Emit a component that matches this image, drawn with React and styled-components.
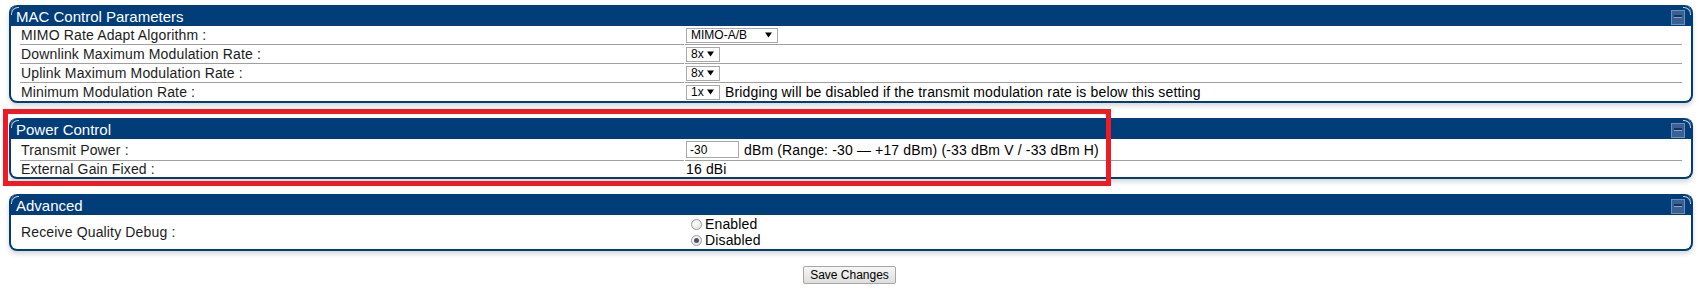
import styled, { createGlobalStyle } from 'styled-components';

const GlobalStyle = createGlobalStyle`
  body {
    margin: 0;
    background: #ffffff;
    font-family: "Liberation Sans", Arial, sans-serif;
  }
`

const Page = styled.div`
  position: relative;
  box-sizing: border-box;
  width: 1699px;
  height: 290px;
  display: flex;
  flex-direction: column;
  padding: 5px 6px 0 9px;
`

const Panel = styled.div`
  box-sizing: border-box;
  width: 100%;
  border: 2px solid #003d79;
  border-top: none;
  border-radius: 8px;
  background: #ffffff;
  box-shadow: 0 3px 5px rgba(0, 0, 0, 0.16);
  margin-bottom: 15px;
  overflow: hidden;
`

const Header = styled.div`
  position: relative;
  box-sizing: border-box;
  display: flex;
  justify-content: space-between;
  align-items: center;
  height: 21px;
  margin: 0 -2px;
  padding: 1px 8px 0 7px;
  background: #003d79;
  color: #ffffff;
  font-size: 15px;
  border-radius: 8px 8px 0 0;

  &::before, &::after {
    content: '';
    position: absolute;
    top: 2px;
    width: 7px;
    height: 7px;
    border-top: 1px solid rgba(225, 232, 242, 0.85);
  }
  &::before {
    left: 2px;
    border-left: 1px solid rgba(225, 232, 242, 0.85);
    border-top-left-radius: 7px;
  }
  &::after {
    right: 2px;
    border-right: 1px solid rgba(225, 232, 242, 0.85);
    border-top-right-radius: 7px;
  }
`

const Minimize = styled.span`
  box-sizing: border-box;
  display: flex;
  align-items: flex-start;
  justify-content: center;
  width: 14px;
  height: 15px;
  margin-top: 2px;
  background: #3a6194;
  border: 1px solid #6e8fbb;
  padding-top: 4px;

  &::before {
    content: '';
    display: block;
    width: 8px;
    height: 2px;
    background: #12335f;
    border-bottom: 1px solid #8aa4c8;
  }
`

const Body = styled.div`
  padding: 0 9px;
`

const Row = styled.div`
  display: grid;
  grid-template-columns: 664px 1fr;
  column-gap: 1px;
  min-height: ${p => p.$h || 19}px;
  font-size: 14px;
  letter-spacing: 0.15px;

  & > div {
    border-bottom: 1px solid #a0a0a0;
  }
  &:last-child > div {
    border-bottom: none;
  }
`

const Label = styled.div`
  display: flex;
  align-items: center;
  padding-left: 1px;
  color: #1c1c1c;
`

const Value = styled.div`
  display: flex;
  align-items: center;
  gap: 5px;
  padding-left: 1px;
  color: #000000;
`

const FakeSelect = styled.span`
  box-sizing: border-box;
  display: inline-flex;
  align-items: center;
  justify-content: space-between;
  width: ${p => p.$w}px;
  height: 15px;
  padding: 0 5px 0 4px;
  border: 1px solid #a9a9a9;
  background: #ffffff;
  font-size: 12px;
  letter-spacing: 0;
  color: #000000;
`

const Arrow = () => (
  <svg width="7" height="6" viewBox="0 0 7 6">
    <path d="M0 0.5 H7 L3.5 5.5 Z" fill="#000" />
  </svg>
)

const TextInput = styled.input`
  box-sizing: border-box;
  width: 53px;
  height: 17px;
  padding: 0 3px;
  border: 1px solid #a9a9a9;
  font-family: "Liberation Sans", Arial, sans-serif;
  font-size: 12px;
  color: #000000;
  outline: none;
`

const RadioGroup = styled.div`
  display: flex;
  flex-direction: column;
  padding: 1px 0 1px 5px;
`

const RadioLine = styled.label`
  display: flex;
  align-items: center;
  gap: 3px;
  height: 16px;
  font-size: 14px;
`

const RadioDot = styled.span`
  box-sizing: border-box;
  display: inline-flex;
  align-items: center;
  justify-content: center;
  width: 11px;
  height: 11px;
  border-radius: 50%;
  border: 1px solid #9c9c9c;
  background: radial-gradient(circle at 40% 35%, #ffffff, #dcdcdc);

  &::after {
    content: '';
    display: ${p => (p.$on ? 'block' : 'none')};
    width: 5px;
    height: 5px;
    border-radius: 50%;
    background: #5b4a6e;
  }
`

const Footer = styled.div`
  display: flex;
  justify-content: center;
  margin-left: -3px;
`

const SaveButton = styled.button`
  box-sizing: border-box;
  width: 93px;
  height: 18px;
  padding: 0;
  border: 1px solid #a6a6a6;
  border-radius: 2px;
  background: linear-gradient(#f6f6f6, #dedede);
  font-family: "Liberation Sans", Arial, sans-serif;
  font-size: 12px;
  color: #000000;
`

const Highlight = styled.div`
  position: absolute;
  left: 3px;
  top: 109px;
  width: 1108px;
  height: 77px;
  box-sizing: border-box;
  border: 5px solid #ed1c24;
  pointer-events: none;
`

const App = () => {
  return (
    <>
      <GlobalStyle />
      <Page>
        <Panel>
          <Header>
            <span>MAC Control Parameters</span>
            <Minimize />
          </Header>
          <Body>
            <Row>
              <Label>MIMO Rate Adapt Algorithm :</Label>
              <Value>
                <FakeSelect $w={92}>MIMO-A/B<Arrow /></FakeSelect>
              </Value>
            </Row>
            <Row>
              <Label>Downlink Maximum Modulation Rate :</Label>
              <Value>
                <FakeSelect $w={34}>8x<Arrow /></FakeSelect>
              </Value>
            </Row>
            <Row>
              <Label>Uplink Maximum Modulation Rate :</Label>
              <Value>
                <FakeSelect $w={34}>8x<Arrow /></FakeSelect>
              </Value>
            </Row>
            <Row $h={18}>
              <Label>Minimum Modulation Rate :</Label>
              <Value>
                <FakeSelect $w={34}>1x<Arrow /></FakeSelect>
                <span>Bridging will be disabled if the transmit modulation rate is below this setting</span>
              </Value>
            </Row>
          </Body>
        </Panel>

        <Panel>
          <Header>
            <span>Power Control</span>
            <Minimize />
          </Header>
          <Body>
            <Row $h={22}>
              <Label>Transmit Power :</Label>
              <Value>
                <TextInput defaultValue="-30" />
                <span>dBm (Range: -30 — +17 dBm) (-33 dBm V / -33 dBm H)</span>
              </Value>
            </Row>
            <Row $h={16}>
              <Label>External Gain Fixed :</Label>
              <Value>16 dBi</Value>
            </Row>
          </Body>
        </Panel>

        <Panel>
          <Header>
            <span>Advanced</span>
            <Minimize />
          </Header>
          <Body>
            <Row $h={34}>
              <Label>Receive Quality Debug :</Label>
              <Value>
                <RadioGroup>
                  <RadioLine><RadioDot />Enabled</RadioLine>
                  <RadioLine><RadioDot $on />Disabled</RadioLine>
                </RadioGroup>
              </Value>
            </Row>
          </Body>
        </Panel>

        <Footer>
          <SaveButton>Save Changes</SaveButton>
        </Footer>

        <Highlight />
      </Page>
    </>
  )
}

export default App
